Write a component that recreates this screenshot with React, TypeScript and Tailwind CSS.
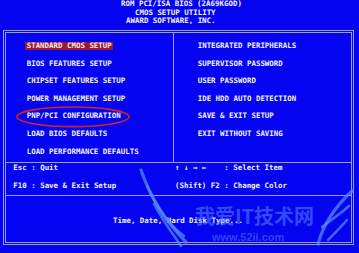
import React from 'react';

const leftItems = [
  'STANDARD CMOS SETUP',
  'BIOS FEATURES SETUP',
  'CHIPSET FEATURES SETUP',
  'POWER MANAGEMENT SETUP',
  'PNP/PCI CONFIGURATION',
  'LOAD BIOS DEFAULTS',
  'LOAD PERFORMANCE DEFAULTS',
];

const rightItems = [
  'INTEGRATED PERIPHERALS',
  'SUPERVISOR PASSWORD',
  'USER PASSWORD',
  'IDE HDD AUTO DETECTION',
  'SAVE & EXIT SETUP',
  'EXIT WITHOUT SAVING',
];

const MenuRow: React.FC<{ label: string; active?: boolean }> = ({ label, active }) => (
  <div className="h-[17.55px] flex items-center">
    <span className={`px-[1.4px] leading-[7.4px] ${active ? 'bg-[#9a1830] text-[#f6e8ee]' : ''}`}>{label}</span>
  </div>
);

const Watermark: React.FC = () => (
  <>
    <svg className="absolute left-0 top-0 pointer-events-none" width="359" height="253" viewBox="0 0 359 253">
      {/* left wing */}
      <g fill="none" stroke="#5a8eff" strokeOpacity="0.7" strokeLinecap="round">
        <path d="M141 170 C150 196 164 220 186 242" strokeWidth="3.2" />
        <path d="M147 186 C156 206 168 224 184 236" strokeWidth="2.6" />
        <path d="M154 204 C161 218 170 230 181 246" strokeWidth="2.6" />
      </g>
      {/* right wing */}
      <g fill="none" stroke="#5a8eff" strokeOpacity="0.7" strokeLinecap="round">
        <path d="M352 191 C338 204 324 222 318 244" strokeWidth="3.2" />
        <path d="M349 206 C340 214 331 220 322 227" strokeWidth="2.6" />
        <path d="M347 220 C340 228 334 234 328 240" strokeWidth="2.6" />
      </g>
    </svg>
    <span className="absolute left-[195px] top-[204px] text-[20px] leading-[24px] font-bold text-[#5d86ff]/55 whitespace-pre font-['Noto_Sans_CJK_SC',sans-serif]">
      我爱IT技术网
    </span>
    <span className="absolute left-[212px] top-[232px] text-[11px] leading-[11px] font-bold text-[#5d86ff]/50 font-['Liberation_Sans',sans-serif]">
      www.52ii.com
    </span>
  </>
);

export default function App() {
  return (
    <div className="relative w-[359px] h-[253px] overflow-hidden bg-[#0404f0] text-[#f2f2ff] font-bold text-[7.45px] font-['DejaVu_Sans_Mono','Liberation_Mono',monospace]">
      <div className="h-[30px] pt-[0.4px] leading-[8.2px] whitespace-pre">
        <div className="pl-[121px]">ROM PCI/ISA BIOS (2A69KGOD)</div>
        <div className="pl-[135px]">CMOS SETUP UTILITY</div>
        <div className="pl-[126px]">AWARD SOFTWARE, INC.</div>
      </div>

      <div className="ml-[3px] w-[351px] h-[215px] border border-[#9c9cf6] p-[1px]">
        <div className="h-full border border-[#9c9cf6] flex flex-col">
          <div className="h-[129px] flex">
            <div className="w-[167px] pt-[4.2px] pl-[19.3px]">
              {leftItems.map((l, i) => (
                <MenuRow key={l} label={l} active={i === 0} />
              ))}
            </div>
            <div className="w-px bg-[#9c9cf6]" />
            <div className="flex-1 pt-[4.2px] pl-[22.3px]">
              {rightItems.map((l) => (
                <MenuRow key={l} label={l} />
              ))}
            </div>
          </div>
          <div className="h-px bg-[#9c9cf6]" />
          <div className="h-[32px] flex leading-[8.8px] whitespace-pre">
            <div className="w-[167px] pl-[7.3px] pt-[1.3px] flex flex-col gap-[8.8px]">
              <span>Esc : Quit</span>
              <span>F10 : Save &amp; Exit Setup</span>
            </div>
            <div className="flex-1 pl-[2px] pt-[1.3px] flex flex-col gap-[8.8px]">
              <span>↑ ↓ → ←    : Select Item</span>
              <span>(Shift) F2 : Change Color</span>
            </div>
          </div>
          <div className="h-px bg-[#9c9cf6]" />
          <div className="flex-1 pt-[20.9px] pl-[107px] leading-[8.8px]">Time, Date, Hard Disk Type...</div>
        </div>
      </div>

      <svg className="absolute left-[16px] top-[106px] pointer-events-none" width="116" height="22" viewBox="0 0 116 22">
        <ellipse cx="57" cy="10.8" rx="56" ry="9.8" fill="none" stroke="#d42424" strokeWidth="1.6" />
      </svg>

      <Watermark />
    </div>
  );
}
